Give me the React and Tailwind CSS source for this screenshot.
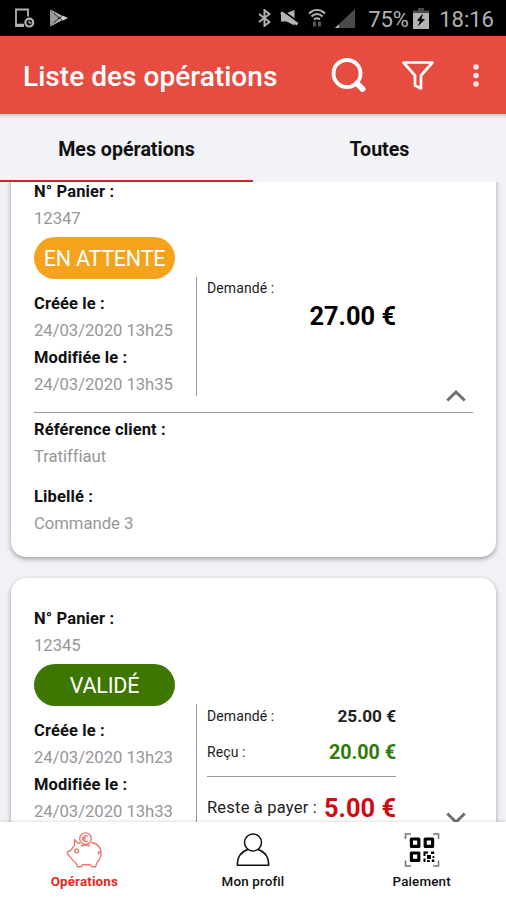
const operations = [
    {
        id: "12347",
        status: "EN ATTENTE",
        badge: "bg-[#f5a31c]",
        created: "24/03/2020 13h25",
        updated: "24/03/2020 13h35",
        asked: "27.00 €",
        open: true,
        client: "Tratiffiaut",
        label: "Commande 3",
    },
    {
        id: "12345",
        status: "VALIDÉ",
        badge: "bg-[#3d7600]",
        created: "24/03/2020 13h23",
        updated: "24/03/2020 13h33",
        asked: "25.00 €",
        received: "20.00 €",
        remaining: "5.00 €",
        open: false,
    },
];

function StatusBar() {
    return (
        <div className="h-9 shrink-0 bg-black text-[#b3b3b3] flex items-center pl-[14px] pr-[12px]">
            <svg width="21" height="20" viewBox="0 0 21 20" fill="none" stroke="currentColor" strokeWidth="1.8">
                <path d="M10 18.2H2V1.5h12v7" />
                <path d="M2 17h8" strokeWidth="2.6" />
                <circle cx="15.3" cy="14.6" r="3.9" strokeWidth="2.2" />
                <path d="M15.2 12.5v2.3h2.5" strokeWidth="1.3" />
            </svg>
            <svg className="ml-[15px]" width="18" height="18" viewBox="0 0 18 18">
                <path d="M0 0.5v17L8 9z" fill="#9a9a9a" />
                <path d="M0.5 0.5l12 6.5-3.7 3zM0.5 17.5L12.5 11 8.8 8z" fill="#b9b9b9" />
                <path d="M12.5 6.5l5.5 2.5-5.5 2.8L9.8 9z" fill="#cfcfcf" />
                <path d="M4 4l8.5 7.5M4 14l8.5-7.5" stroke="#222" strokeWidth="0.9" />
            </svg>
            <div className="flex-1" />
            <svg width="13" height="18" viewBox="0 0 13 18" fill="none" stroke="currentColor" strokeWidth="2">
                <path d="M1 5l10.5 8-5 3.8V1.2l5 3.8L1 13" />
            </svg>
            <svg className="ml-[9px]" width="19" height="18" viewBox="0 0 19 18" fill="currentColor">
                <path d="M1 4.5h4.5L14.5 1v15.5L6.5 12.5H1z" />
                <path d="M2 1.200l16 11.5" stroke="#000" strokeWidth="2" />
                <path d="M1 3.5l16.5 11.8" stroke="currentColor" strokeWidth="3" />
            </svg>
            <svg className="ml-[8px]" width="20" height="20" viewBox="0 0 20 20" fill="none" stroke="currentColor" strokeWidth="2">
                <path d="M2 5.5c5-4.6 11-4.6 16 0" />
                <path d="M4.5 8.5c3.4-3 7.6-3 11 0" />
                <path d="M7 11.5c2-1.6 4-1.6 6 0" />
                <path d="M7.5 18.5v-5M12.5 13.5v5" strokeWidth="2.8" stroke="#5c5c5c" />
            </svg>
            <svg className="ml-[8px]" width="20" height="19" viewBox="0 0 20 19">
                <path d="M20 0v19H0z" fill="#4a4a4a" />
                <path d="M4 15.2V19H0z" fill="#b3b3b3" />
            </svg>
            <span className="ml-[13px] text-[22px] leading-9 mt-[3px] w-[42px] tracking-[-0.1px]">75%</span>
            <svg className="ml-[3px] mt-px" width="16" height="21" viewBox="0 0 16 21">
                <path d="M5 0h6v2.500h5V6H0V2.500h5z" fill="#4a4a4a" />
                <path d="M0 5h16v16H0z" fill="#b3b3b3" />
                <path d="M9.5 6L4 12.5l3 .8-2.5 5.200 7.5-7-3.5-1 1.5-4.5z" fill="#000" />
            </svg>
            <span className="ml-[10px] text-[22px] leading-9 mt-[3px]">18:16</span>
        </div>
    );
}

function Header() {
    return (
        <div className="h-[78px] shrink-0 bg-[#e74c41] text-white flex items-center pl-[23px] pr-[27px]">
            <h1 className="text-[28.1px] font-medium leading-8 mt-1 whitespace-nowrap flex-1">Liste des opérations</h1>
            <svg className="mr-[35px]" width="36" height="36" viewBox="0 0 36 36" fill="none" stroke="#fff">
                <circle cx="16" cy="16.5" r="13.5" strokeWidth="3.8" />
                <path d="M26 26.5l5.500 5.500" strokeWidth="6" strokeLinecap="round" />
            </svg>
            <svg className="mr-[39px]" width="32" height="30" viewBox="0 0 32 30" fill="none" stroke="#fff" strokeWidth="2.7" strokeLinejoin="round">
                <path d="M1.500 2.500h29L19 15.500v13l-6-3V15.500z" />
            </svg>
            <svg className="mb-px" width="6" height="24" viewBox="0 0 6 24" fill="#fff" opacity="0.85">
                <circle cx="3" cy="4" r="2.8" />
                <circle cx="3" cy="12.5" r="2.8" />
                <circle cx="3" cy="21" r="2.8" />
            </svg>
        </div>
    );
}

function Field({ label, value }) {
    return (
        <div>
            <p className="h-[27px] leading-[28px] text-[16.5px] font-bold text-[#111] tracking-[0.12px]">{label}</p>
            <p className="h-[27.5px] leading-[27.5px] text-[16.7px] text-[#979797] tracking-[-0.05px]">{value}</p>
        </div>
    );
}

function OperationCard({ op }) {
    return (
        <div className="bg-white rounded-[15px] shadow-[0_2px_5px_rgba(0,0,0,0.35)] pt-[27px] px-[23px] pb-5">
            <div className="flex">
                <div className="w-[141px] shrink-0">
                    <Field label="N° Panier :" value={op.id} />
                    <div className={`h-[42px] mt-[4.5px] mb-[10.5px] rounded-full text-white text-[21.5px] tracking-[-0.2px] leading-[44px] text-center whitespace-nowrap ${op.badge}`}>
                        {op.status}
                    </div>
                    <Field label="Créée le :" value={op.created} />
                    <Field label="Modifiée le :" value={op.updated} />
                </div>

                <div className="ml-[21px] mt-[99px] w-[200px] h-[119px] shrink-0 border-l border-[#999] pl-[10px] text-[#222]">
                    {op.received ? (
                        <div>
                            <div className="flex justify-between items-center h-[25px]">
                                <span className="text-[14px] tracking-[0.1px]">Demandé :</span>
                                <span className="text-[17.2px] font-bold">{op.asked}</span>
                            </div>
                            <div className="flex justify-between items-center h-[47px]">
                                <span className="text-[14px] tracking-[0.1px]">Reçu :</span>
                                <span className="text-[19.7px] font-bold text-[#2f7a0b]">{op.received}</span>
                            </div>
                            <div className="border-t border-[#999] flex justify-between items-center h-[63px] whitespace-nowrap">
                                <span className="text-[16.5px] tracking-[0.2px]">Reste à payer :</span>
                                <span className="text-[25.4px] font-bold text-[#cf0a12]">{op.remaining}</span>
                            </div>
                        </div>
                    ) : (
                        <div>
                            <p className="text-[14px] tracking-[0.1px] leading-[22px]">Demandé :</p>
                            <p className="text-[25.4px] font-bold text-right text-black leading-[34px]">{op.asked}</p>
                        </div>
                    )}
                </div>

                <svg
                    className={op.open ? "ml-auto mr-[7px] mb-[-4.5px] self-end" : "ml-auto mr-[7px] mb-[-0.5px] self-end"}
                    width="20"
                    height="14"
                    viewBox="0 0 20 14"
                    fill="none"
                    stroke="#6f6f6f"
                    strokeWidth="3"
                >
                    <path d={op.open ? "M1.3 11.5L10 3l8.7 8.5" : "M1.3 1.5L10 10l8.7-8.5"} />
                </svg>
            </div>

            {op.open && (
                <div className="mt-[13.5px] border-t border-[#999] pt-[3px]">
                    <Field label="Référence client :" value={op.client} />
                    <div className="mt-[12px]">
                        <Field label="Libellé :" value={op.label} />
                    </div>
                </div>
            )}
        </div>
    );
}

function PiggyIcon() {
    return (
        <svg width="36" height="36" viewBox="0 0 36 36" fill="none" stroke="#ea7971" strokeWidth="1.4" strokeLinejoin="round">
            <circle cx="19.5" cy="6.7" r="5.8" />
            <path d="M21.8 4.3c-3-1.5-4.8.3-4.8 2.4s1.8 3.9 4.8 2.4M15.8 6h4M15.8 7.9h4" />
            <path d="M14 10.8l-2 .4L8.5 7.5v6C6.5 15.5 5.5 17.5 4.5 18.5L1.5 20v2.5L4 24.5c1.5 2.5 3.5 5 6 6.5l1.5 3.700h4l1-2h8l1 2h4l1.5-4.200c2.5-2.5 4-6 4-9.5 0-5.5-3.5-9.5-9.5-10.5" />
            <path d="M15 13.8c3-.8 6-.8 9 0M34.8 20.5c-2.5-1.5-3.5 1-1.5 2" />
            <circle cx="10.7" cy="18.8" r="1.9" />
        </svg>
    );
}

function ProfileIcon() {
    return (
        <svg width="34" height="34" viewBox="0 0 34 34" fill="none" stroke="#111" strokeWidth="1.5" strokeLinejoin="round">
            <circle cx="17" cy="9.5" r="8.5" />
            <path d="M12 16.5C5.5 18.5 1.3 24 1.3 32.3h31.4c0-8.3-4.2-13.8-10.7-15.8" />
        </svg>
    );
}

function QrIcon() {
    return (
        <svg width="36" height="36" viewBox="0 0 36 36" fill="none">
            <path d="M1.5 7V2h5.5M29 2h5.5v5M34.5 28.5v5.5H29M7 34H1.5v-5.5" stroke="#777" strokeWidth="1.6" />
            <g stroke="#000" strokeWidth="3.2" strokeLinejoin="round">
                <rect x="7.4" y="7" width="7.4" height="7.4" />
                <rect x="21.2" y="7" width="7.4" height="7.4" />
                <rect x="7.4" y="21" width="7.4" height="7.4" />
            </g>
            <path d="M19.5 19.5h4.5v2h-2.5v2.5h-2zM27 19.5h3.2V22H27zM23 23h4v4h-4zM19.5 26.5h2v3.5h-2zM23 28.2h3V30h-3zM28.5 24h1.8v2h-1.8zM27.8 27.5h2.5v2.5h-2.5z" fill="#000" />
        </svg>
    );
}

function BottomNav() {
    return (
        <div className="relative h-[78px] shrink-0 bg-white grid grid-cols-3 shadow-[0_-1px_3px_rgba(0,0,0,0.12)] text-[13.4px] text-[#111] tracking-[0.15px]">
            <div className="flex flex-col items-center pt-[10px] text-[#e52a1c] font-bold">
                <PiggyIcon />
                <span className="mt-[4px] leading-5">Opérations</span>
            </div>
            <div className="flex flex-col items-center pt-[11px] font-medium">
                <ProfileIcon />
                <span className="mt-[5px] leading-5">Mon profil</span>
            </div>
            <div className="flex flex-col items-center pt-[10px] font-medium">
                <QrIcon />
                <span className="mt-[4px] leading-5">Paiement</span>
            </div>
        </div>
    );
}

function App() {
    return (
        <div className="w-[506px] h-[900px] overflow-hidden flex flex-col bg-[#f0f2f6] font-['Roboto',sans-serif]">
            <StatusBar />
            <Header />

            <div className="relative h-[68px] shrink-0 grid grid-cols-2 grid-rows-[68px] text-center text-[19.6px] font-bold text-[#111] leading-[72px] bg-[#f1f3f6] shadow-[inset_0_4px_3px_-2px_rgba(0,0,0,0.18)]">
                <div className="h-[68px] border-b-2 border-[#e0201f]">Mes opérations</div>
                <div>Toutes</div>
            </div>

            <div className="flex-1 min-h-0 overflow-hidden">
                <div className="mt-[-31px] pl-[11px] pr-[10px] flex flex-col gap-[21px]">
                    {operations.map((op) => (
                        <OperationCard key={op.id} op={op} />
                    ))}
                </div>
            </div>

            <BottomNav />
        </div>
    );
}

export default App;
